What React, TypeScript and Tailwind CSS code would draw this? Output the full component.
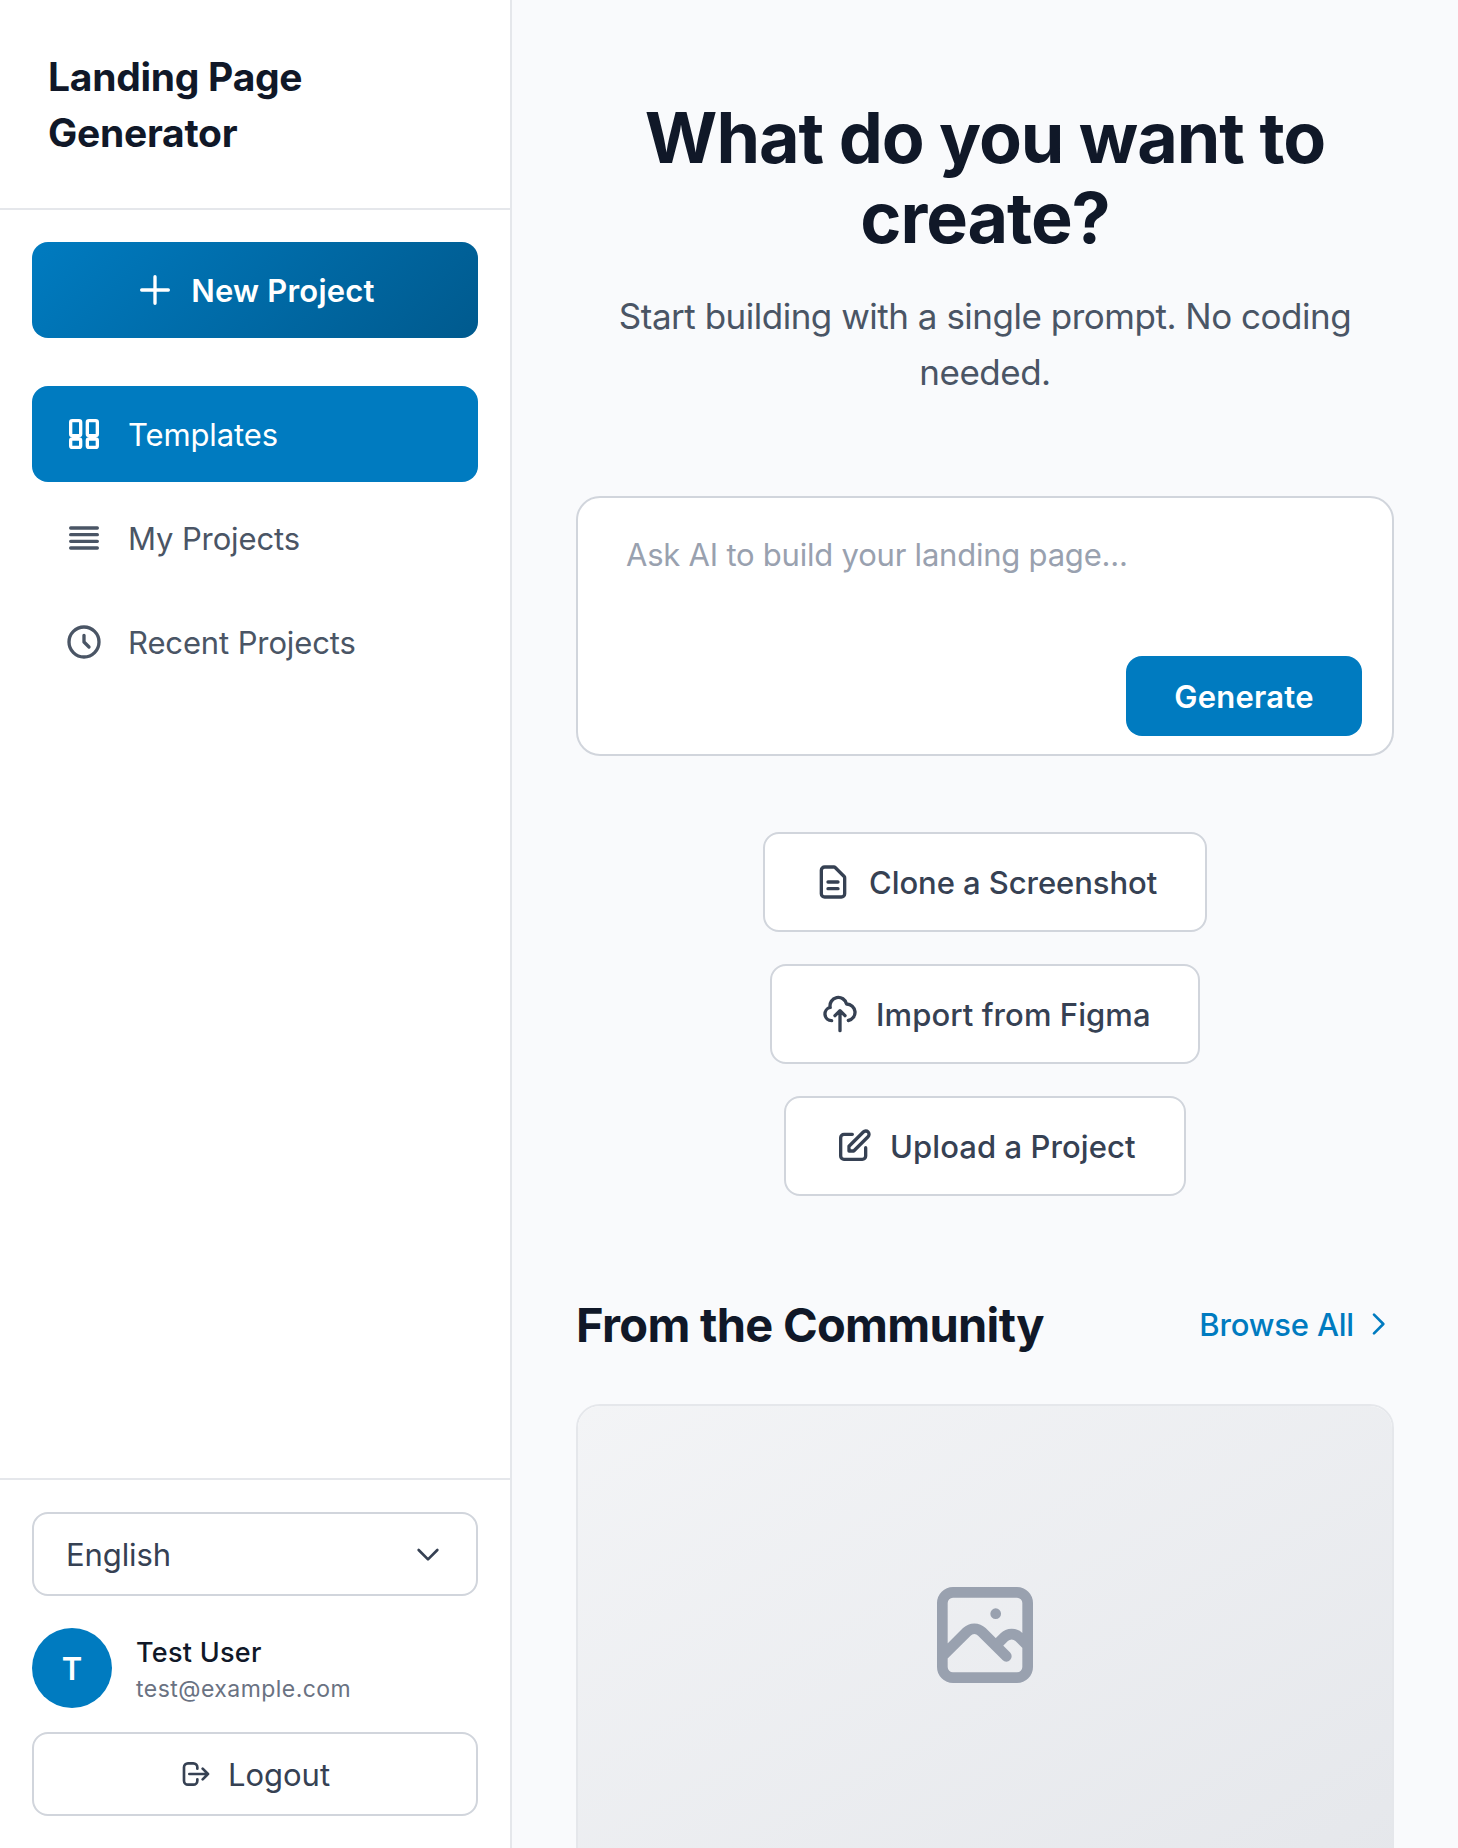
import type { ReactNode } from "react";

type IconProps = { d: string; className?: string };

function Icon({ d, className = "size-10" }: IconProps) {
  return (
    <svg
      viewBox="0 0 24 24"
      fill="none"
      stroke="currentColor"
      strokeWidth={2}
      strokeLinecap="round"
      strokeLinejoin="round"
      className={`shrink-0 ${className}`}
      aria-hidden="true"
    >
      <path d={d} />
    </svg>
  );
}

const icons = {
  plus: "M12 4v16m8-8H4",
  templates:
    "M4 5a1 1 0 011-1h4a1 1 0 011 1v7a1 1 0 01-1 1H5a1 1 0 01-1-1V5zM14 5a1 1 0 011-1h4a1 1 0 011 1v7a1 1 0 01-1 1h-4a1 1 0 01-1-1V5zM4 16a1 1 0 011-1h4a1 1 0 011 1v3a1 1 0 01-1 1H5a1 1 0 01-1-1v-3zM14 16a1 1 0 011-1h4a1 1 0 011 1v3a1 1 0 01-1 1h-4a1 1 0 01-1-1v-3z",
  list: "M4 6h16M4 10h16M4 14h16M4 18h16",
  clock: "M12 8v4l3 3m6-3a9 9 0 11-18 0 9 9 0 0118 0z",
  chevronDown: "M19 9l-7 7-7-7",
  chevronRight: "M9 5l7 7-7 7",
  logout:
    "M17 16l4-4m0 0l-4-4m4 4H7m6 4v1a3 3 0 01-3 3H6a3 3 0 01-3-3V7a3 3 0 013-3h4a3 3 0 013 3v1",
  document:
    "M9 12h6m-6 4h6m2 5H7a2 2 0 01-2-2V5a2 2 0 012-2h5.586a1 1 0 01.707.293l5.414 5.414a1 1 0 01.293.707V19a2 2 0 01-2 2z",
  cloudUpload:
    "M7 16a4 4 0 01-.88-7.903A5 5 0 1115.9 6L16 6a5 5 0 011 9.9M15 13l-3-3m0 0l-3 3m3-3v12",
  edit: "M11 5H6a2 2 0 00-2 2v11a2 2 0 002 2h11a2 2 0 002-2v-5m-1.414-9.414a2 2 0 112.828 2.828L11.828 15H9v-2.828l8.586-8.586z",
  photo:
    "M4 16l4.586-4.586a2 2 0 012.828 0L16 16m-2-2l1.586-1.586a2 2 0 012.828 0L20 14m-6-6h.01M6 20h12a2 2 0 002-2V6a2 2 0 00-2-2H6a2 2 0 00-2 2v12a2 2 0 002 2z",
};

function NavItem({ icon, active = false, children }: { icon: string; active?: boolean; children: ReactNode }) {
  return (
    <a
      className={`flex h-24 items-center gap-6 rounded-2xl px-8 text-[31px] tracking-[-0.12px] ${
        active ? "bg-[#007bc0] text-white" : "text-gray-600"
      }`}
    >
      <Icon d={icon} />
      <span className="pt-0.5">{children}</span>
    </a>
  );
}

function ActionButton({ icon, className, children }: { icon: string; className: string; children: ReactNode }) {
  return (
    <button
      className={`flex h-[100px] items-center gap-4 rounded-2xl border-2 border-gray-300 bg-white pl-12 text-[31px] font-medium whitespace-nowrap text-gray-700 ${className}`}
    >
      <Icon d={icon} />
      <span className="pt-0.5">{children}</span>
    </button>
  );
}

function Sidebar() {
  return (
    <aside className="flex w-[512px] shrink-0 flex-col border-r-2 border-gray-200 bg-white">
      <div className="border-b-2 border-gray-200 px-12 pt-[49px] pb-[47px]">
        <h1 className="text-[39px] leading-[56px] font-bold tracking-[-0.27px] text-gray-900">
          Landing Page
          <br />
          Generator
        </h1>
      </div>
      <div className="flex flex-1 flex-col px-8 pt-8">
        <button className="flex h-24 items-center justify-center gap-4 rounded-2xl bg-[linear-gradient(135deg,#007bc0,#005a8e)] text-[31px] font-semibold tracking-[0.2px] text-white">
          <Icon d={icons.plus} />
          <span className="pt-0.5">New Project</span>
        </button>
        <nav className="mt-12 flex flex-col gap-2">
          <NavItem icon={icons.templates} active>
            Templates
          </NavItem>
          <NavItem icon={icons.list}>My Projects</NavItem>
          <NavItem icon={icons.clock}>Recent Projects</NavItem>
        </nav>
      </div>
      <div className="border-t-2 border-gray-200 p-8">
        <button className="flex h-[84px] w-full items-center justify-between rounded-2xl border-2 border-gray-300 px-8 text-[31px] tracking-[-0.1px] text-gray-700">
          <span className="pt-0.5">English</span>
          <Icon d={icons.chevronDown} className="size-8" />
        </button>
        <div className="mt-8 flex items-center gap-6">
          <div className="flex size-20 items-center justify-center rounded-full bg-[#007bc0] pt-0.5 text-[31px] font-semibold text-white">
            T
          </div>
          <div className="pt-0.5">
            <p className="text-[27px] leading-10 font-medium tracking-[0.28px] text-gray-900">Test User</p>
            <p className="text-[23px] leading-8 tracking-[0.46px] text-gray-500">test@example.com</p>
          </div>
        </div>
        <button className="mt-6 flex h-[84px] w-full items-center justify-center gap-4 rounded-2xl border-2 border-gray-300 text-[31px] text-gray-700">
          <Icon d={icons.logout} className="size-8" />
          <span className="pt-0.5">Logout</span>
        </button>
      </div>
    </aside>
  );
}

export default function App() {
  return (
    <div className="flex h-[1848px] w-[1458px] overflow-hidden bg-[#f9fafc] font-['Inter',sans-serif]">
      <Sidebar />
      <main className="flex-1 overflow-hidden px-16 pt-[98px]">
        <h2 className="text-center text-[70px] leading-[80px] font-bold tracking-[-1.05px] whitespace-nowrap text-gray-900">
          What do you want to
          <br />
          create?
        </h2>
        <p className="mt-[30px] text-center text-[35px] leading-[56px] tracking-[-0.49px] whitespace-nowrap text-gray-600">
          Start building with a single prompt. No coding
          <br />
          needed.
        </p>
        <div className="mt-24 flex h-[260px] flex-col justify-between rounded-3xl border-2 border-gray-300 bg-white pt-[33px] pr-[30px] pb-[18px] pl-12">
          <p className="text-[31px] leading-[48px] tracking-[-0.22px] text-gray-400">
            Ask AI to build your landing page...
          </p>
          <button className="h-20 w-[236px] self-end rounded-2xl bg-[#007bc0] pt-0.5 text-[31px] font-semibold tracking-[0.24px] text-white">
            Generate
          </button>
        </div>
        <div className="mt-[76px] flex flex-col items-center gap-8">
          <ActionButton icon={icons.document} className="w-[444px] tracking-[-0.06px]">
            Clone a Screenshot
          </ActionButton>
          <ActionButton icon={icons.cloudUpload} className="w-[430px] tracking-[0.08px]">
            Import from Figma
          </ActionButton>
          <ActionButton icon={icons.edit} className="w-[402px] tracking-[0.08px]">
            Upload a Project
          </ActionButton>
        </div>
        <div className="mt-24 flex h-16 items-center justify-between">
          <h3 className="pt-0.5 text-[47px] font-bold tracking-[-0.7px] whitespace-nowrap text-gray-900">
            From the Community
          </h3>
          <a className="flex items-center gap-2 text-[31px] font-medium tracking-[-0.18px] whitespace-nowrap text-[#007bc0]">
            <span className="pt-0.5">Browse All</span>
            <Icon d={icons.chevronRight} className="size-8" />
          </a>
        </div>
        <div className="mt-12 h-[600px] overflow-hidden rounded-3xl border-2 border-gray-200 bg-white">
          <div className="flex h-[458px] items-center justify-center bg-linear-to-br from-gray-100 to-gray-200 text-gray-400">
            <Icon d={icons.photo} className="size-32" />
          </div>
        </div>
      </main>
    </div>
  );
}
